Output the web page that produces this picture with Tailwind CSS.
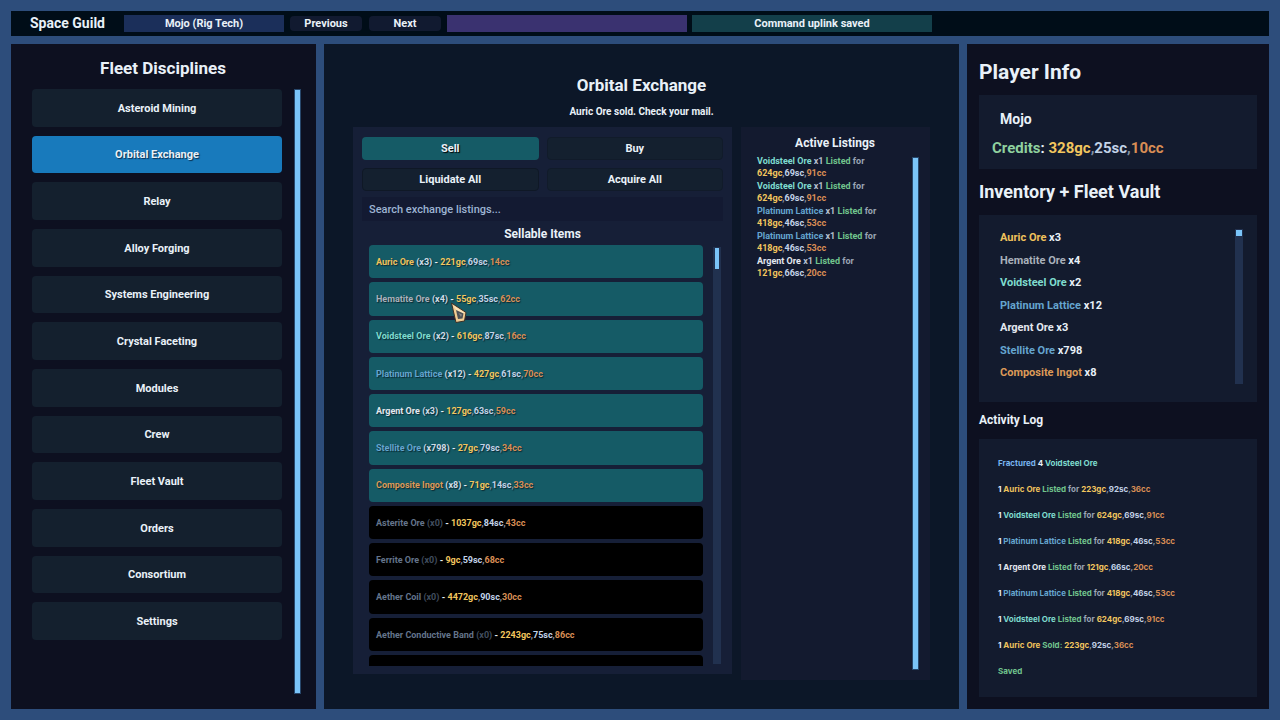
<!DOCTYPE html>
<html lang="en">
<head>
    <meta charset="UTF-8">
    <meta name="viewport" content="width=device-width, initial-scale=1.0">
    <title>Space Guild</title>
    <script src="https://cdn.jsdelivr.net/npm/@tailwindcss/browser@4"></script>
</head>
<body class="flex h-screen flex-col gap-2 overflow-hidden bg-[#2d4d7b] p-[11px] font-['Roboto','Liberation_Sans',sans-serif] text-[11px] font-bold text-[#e9f1f8]">
    <!-- Top bar -->
    <header class="flex h-[25px] shrink-0 items-center bg-[#000d18] pl-[19px]">
        <h1 class="w-[94px] whitespace-nowrap text-[14px]">Space Guild</h1>
        <div class="flex h-[17px] w-[160px] items-center justify-center bg-[#1b2f5a] pt-[2px]">Mojo (Rig Tech)</div>
        <button type="button" class="ml-[6px] h-[15px] w-[72px] rounded-sm bg-[#111a30] leading-[15px]">Previous</button>
        <button type="button" class="ml-[7px] h-[15px] w-[72px] rounded-sm bg-[#111a30] leading-[15px]">Next</button>
        <div class="ml-[6px] h-[17px] w-[240px] bg-[#3a3270]"></div>
        <div class="ml-[5px] flex h-[17px] w-[240px] items-center justify-center bg-[#133f4a] pt-[2px]">Command uplink saved</div>
    </header>

    <div class="flex min-h-0 flex-1 gap-2">
        <!-- Disciplines -->
        <nav class="flex w-[305px] shrink-0 flex-col bg-[#0d1020] pt-[14px] pr-[15px] pb-[15px] pl-[21px]">
            <h2 class="mb-[11px] w-[262px] text-center text-[17px] leading-5">Fleet Disciplines</h2>
            <div class="flex min-h-0 flex-1 gap-[12px]">
                <div id="navList" class="flex flex-1 flex-col gap-[9px] pb-[54px]"></div>
                <div class="w-[7px] border border-[#27476b] bg-[#7ac4f8]"></div>
            </div>
        </nav>

        <!-- Exchange -->
        <main class="flex min-w-0 flex-1 flex-col bg-[#0c1728] px-[29px] pt-[31px] pb-[29px]">
            <h2 class="text-center text-[17px] leading-5">Orbital Exchange</h2>
            <p class="mt-[10px] mb-[9px] text-center text-[10px] leading-[13px]">Auric Ore sold. Check your mail.</p>
            <div class="flex min-h-0 flex-1 gap-[9px]">
                <section class="mb-[6px] flex flex-1 flex-col bg-[#161f37] px-[9px] pt-[10px] pb-[8px]">
                    <div class="grid grid-cols-2 gap-x-2 gap-y-[8px]">
                        <button type="button" class="h-[23px] rounded-sm bg-[#155b66] pt-[2px] [text-shadow:1px_1px_1px_#000]">Sell</button>
                        <button type="button" class="h-[23px] rounded-sm border border-[#111b2a] bg-[#14202f] pt-[2px]">Buy</button>
                        <button type="button" class="h-[23px] rounded-sm border border-[#0f1826] bg-[#14202f] pt-[2px]">Liquidate All</button>
                        <button type="button" class="h-[23px] rounded-sm border border-[#111b2a] bg-[#14202f] pt-[2px]">Acquire All</button>
                    </div>
                    <input type="text" aria-label="Search exchange listings" placeholder="Search exchange listings..." class="mt-[6px] h-[24px] w-full bg-[#131a32] px-[7px] font-medium placeholder:text-[#9db4d2]">
                    <h3 class="mt-[5px] mb-[3px] text-center text-[12px] leading-4">Sellable Items</h3>
                    <div class="flex min-h-0 flex-1 gap-[10px] pr-[2px] pl-[7px]">
                        <div id="sellList" class="flex min-h-0 flex-1 flex-col gap-1"></div>
                        <div class="my-[2px] w-2 bg-[#21314f] px-[2px] pt-px">
                            <div class="h-[21px] bg-[#7ac4f8]"></div>
                        </div>
                    </div>
                </section>
                <section class="flex w-[189px] shrink-0 flex-col bg-[#131a2f] pt-[8px] pr-[11px] pb-[10px] pl-[16px]">
                    <h3 class="pr-[6px] text-center text-[12px] leading-4">Active Listings</h3>
                    <div class="flex min-h-0 flex-1 justify-between pt-[4px]">
                        <ul id="listings" class="flex w-[130px] flex-col gap-px text-[9px] leading-3"></ul>
                        <div class="mt-[2px] w-[7px] border border-[#27476b] bg-[#7ac4f8]"></div>
                    </div>
                </section>
            </div>
        </main>

        <!-- Player -->
        <aside class="flex w-[302px] shrink-0 flex-col bg-[#0d1020] px-[12px] pt-[14px] pb-[12px]">
            <h2 class="text-[21px] leading-7">Player Info</h2>
            <section class="mt-[9px] flex h-[74px] shrink-0 flex-col gap-[9px] bg-[#131b2e] px-[13px] pt-[14px]">
                <p class="pl-[8px] text-[14px] leading-5">Mojo</p>
                <p class="text-[15px] leading-5"><span class="text-[#8fd19e]">Credits</span>: <span id="credits"></span></p>
            </section>
            <h2 class="mt-[9px] text-[18px] leading-7">Inventory + Fleet Vault</h2>
            <section class="mt-[9px] flex h-[187px] shrink-0 justify-between bg-[#131b2e] pt-[14px] pr-[14px] pb-[18px] pl-[21px]">
                <ul id="inventory" class="flex flex-col justify-between pt-px pb-[3px] leading-4"></ul>
                <div class="w-2 bg-[#21314f] px-px pt-px">
                    <div class="h-[6px] bg-[#7ac4f8]"></div>
                </div>
            </section>
            <h3 class="mt-[10px] mb-[11px] text-[12px] leading-4">Activity Log</h3>
            <section class="min-h-0 flex-1 bg-[#131b2e] pt-[16px] pl-[19px]">
                <ul id="log" class="flex flex-col gap-[10px] font-['Inter','Liberation_Sans',sans-serif] text-[8px] leading-4"></ul>
            </section>
        </aside>
    </div>

    <!-- Pointer -->
    <svg class="pointer-events-none absolute top-[302px] left-[450px] h-[22px] w-[18px]" viewBox="0 0 18 22" aria-hidden="true">
        <path d="M1.500 1L16 10.500L14.500 19L6 20.500Z" fill="#efcb92" stroke="#3b3026" stroke-width="1" stroke-linejoin="round"/>
        <path d="M2.500 3L14.500 10.500L13.500 11.500L6.500 8Z" fill="#fae6bd"/>
        <path d="M6 8L13.500 11.500L12.500 16.500L8 17Z" fill="#4c5157"/>
        <path d="M8.500 11L12 12.500L11 15Z" fill="#868683"/>
    </svg>

    <script>
        const navItems = ['Asteroid Mining', 'Orbital Exchange', 'Relay', 'Alloy Forging', 'Systems Engineering', 'Crystal Faceting', 'Modules', 'Crew', 'Fleet Vault', 'Orders', 'Consortium', 'Settings'];

        const colors = {
            'Auric Ore': 'text-[#efc25c]',
            'Hematite Ore': 'text-[#a9b1bb]',
            'Voidsteel Ore': 'text-[#7fdccf]',
            'Platinum Lattice': 'text-[#65a5cf]',
            'Argent Ore': 'text-[#e3e8ef]',
            'Stellite Ore': 'text-[#65a5cf]',
            'Composite Ingot': 'text-[#dc9a58]'
        };

        const stock = [
            ['Auric Ore', 3, 221, 69, 14],
            ['Hematite Ore', 4, 55, 35, 62],
            ['Voidsteel Ore', 2, 616, 87, 16],
            ['Platinum Lattice', 12, 427, 61, 70],
            ['Argent Ore', 3, 127, 63, 59],
            ['Stellite Ore', 798, 27, 79, 34],
            ['Composite Ingot', 8, 71, 14, 33],
            ['Asterite Ore', 0, 1037, 84, 43],
            ['Ferrite Ore', 0, 9, 59, 68],
            ['Aether Coil', 0, 4472, 90, 30],
            ['Aether Conductive Band', 0, 2243, 75, 86]
        ];

        const listings = [
            ['Voidsteel Ore', 624, 69, 91],
            ['Voidsteel Ore', 624, 69, 91],
            ['Platinum Lattice', 418, 46, 53],
            ['Platinum Lattice', 418, 46, 53],
            ['Argent Ore', 121, 66, 20]
        ];

        const sales = [
            ['Auric Ore', 'Listed', 223, 92, 36],
            ['Voidsteel Ore', 'Listed', 624, 69, 91],
            ['Platinum Lattice', 'Listed', 418, 46, 53],
            ['Argent Ore', 'Listed', 121, 66, 20],
            ['Platinum Lattice', 'Listed', 418, 46, 53],
            ['Voidsteel Ore', 'Listed', 624, 69, 91],
            ['Auric Ore', 'Sold:', 223, 92, 36]
        ];

        function money(g, s, c) {
            return `<span class="text-[#f2c65e]">${g}gc</span><span class="text-[#8291a5]">,</span><span class="text-[#c3d3e8]">${s}sc</span><span class="text-[#8291a5]">,</span><span class="text-[#d98e55]">${c}cc</span>`;
        }

        function itemName(name) {
            return `<span class="${colors[name] || 'text-[#64748b]'}">${name}</span>`;
        }

        function fill(id, rows) {
            document.getElementById(id).innerHTML = rows.join('');
        }

        fill('navList', navItems.map(n => n === 'Orbital Exchange'
            ? `<button type="button" class="min-h-0 flex-1 rounded-sm bg-[#187abc] pt-[2px] [text-shadow:1px_1px_1px_#0b3050]">${n}</button>`
            : `<button type="button" class="min-h-0 flex-1 rounded-sm bg-[#14202e] pt-[2px]">${n}</button>`));

        fill('sellList', stock.map(([name, qty, g, s, c]) => qty
            ? `<button type="button" class="min-h-0 flex-1 rounded-sm bg-[#155b66] px-[7px] pt-[2px] text-left text-[9px] [text-shadow:1px_1px_1px_#0a2a33]">${itemName(name)} <span class="text-[#cfdbe6]">(x${qty})</span> - ${money(g, s, c)}</button>`
            : `<button type="button" class="min-h-0 flex-1 rounded-sm bg-black px-[7px] pt-[2px] text-left text-[9px]">${itemName(name)} <span class="text-[#414d5e]">(x0)</span> - ${money(g, s, c)}</button>`
        ).concat('<div class="h-[11px] shrink-0 rounded-t-sm bg-black"></div>'));

        fill('listings', listings.map(([name, g, s, c]) =>
            `<li>${itemName(name)} <span class="text-[#b4bfcd]">x1</span> <span class="text-[#71c48d]">Listed</span> <span class="text-[#9aa5b4]">for</span><br>${money(g, s, c)}</li>`));

        fill('inventory', stock.filter(r => r[1]).map(([name, qty]) => `<li>${itemName(name)} x${qty}</li>`));

        fill('log', [
            `<li><span class="text-[#78b4f0]">Fractured</span> 4 ${itemName('Voidsteel Ore')}</li>`,
            ...sales.map(([name, verb, g, s, c]) =>
                `<li>1 ${itemName(name)} <span class="text-[#71c48d]">${verb}</span> ${verb === 'Listed' ? '<span class="text-[#9aa5b4]">for</span> ' : ''}${money(g, s, c)}</li>`),
            '<li class="text-[#71c48d]">Saved</li>'
        ]);

        document.getElementById('credits').innerHTML = money(328, 25, 10);
    </script>
</body>
</html>
